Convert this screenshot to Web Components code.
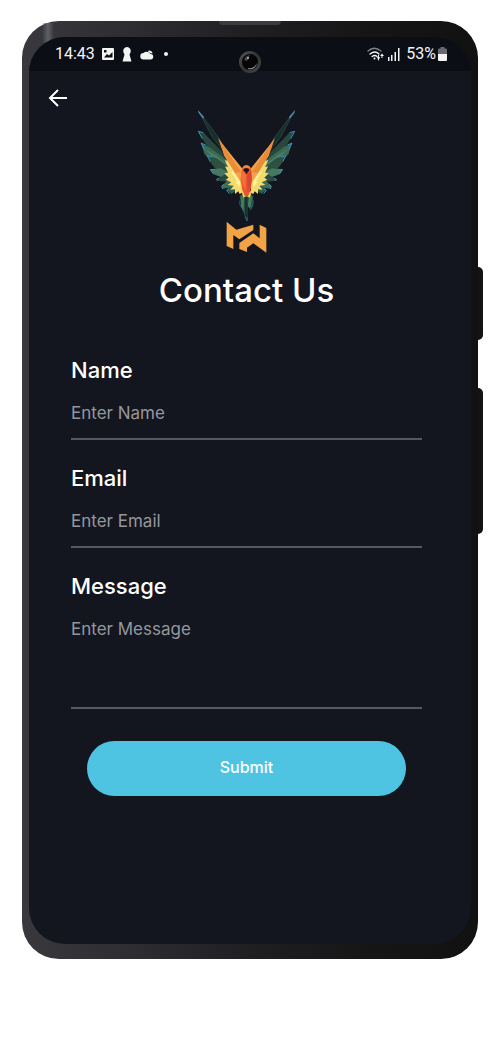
<!DOCTYPE html>
<html lang="en">
<head>
<meta charset="utf-8">
<meta name="viewport" content="width=device-width, initial-scale=1">
<title>Contact Us</title>
<style>
  body { margin: 0; background: #fff; color: #fff; font-family: Inter, "Open Sans", sans-serif; }
</style>
</head>
<body>
<phone-frame>
  <status-bar slot="status"></status-bar>
  <contact-page></contact-page>
</phone-frame>

<template id="phone-frame">
  <style>
    :host { display: block; padding: 21px 22px; }
    .body { position: relative; padding: 16px 7px 15px; border-radius: 37px;
      background: linear-gradient(90deg, #38383d, #2d2c31 25%, #1f1f22 50%, #161617 75%, #111); }
    .body::before { content: ""; position: absolute; left: 20px; top: 2px; width: 12px; height: 20px;
      background: linear-gradient(90deg, transparent, #5c6266, transparent); }
    .speaker { position: absolute; top: 0; left: 197px; right: 197px; height: 4px; background: #3c3c40; border-radius: 0 0 4px 4px; }
    .key { position: absolute; left: 100%; width: 5px; background: #131313; border-radius: 0 5px 5px 0; }
    .power { top: 246px; height: 73px; }
    .volume { top: 367px; height: 146px; }
    .screen { position: relative; overflow: hidden; border-radius: 36px; background: #13151f; }
    .camera { position: absolute; top: 30px; left: 50%; margin-left: -11px; width: 22px; height: 22px; }
  </style>
  <div class="body">
    <div class="speaker"></div>
    <div class="key power"></div>
    <div class="key volume"></div>
    <div class="screen"><slot name="status"></slot><slot></slot></div>
    <svg class="camera" viewBox="0 0 22 22" aria-hidden="true">
      <defs><linearGradient id="ring" x2="1" y2="1"><stop stop-color="#55575a"/><stop offset=".5" stop-color="#313234"/><stop offset="1" stop-color="#46494c"/></linearGradient></defs>
      <circle cx="11" cy="11" r="11" fill="url(#ring)"/>
      <circle cx="11" cy="11" r="8" fill="#050506"/>
      <path d="M9 17q6 1 9-5a7 7 0 0 1-9 6z" fill="#8a8d90"/>
      <path d="M5 9q1-4 6-5L8 10z" fill="#45484c"/>
      <circle cx="9" cy="7" r="1" fill="#bbb"/>
    </svg>
  </div>
</template>

<template id="status-bar">
  <style>
    :host { display: flex; align-items: center; justify-content: space-between; height: 34px; padding: 0 24px 0 26px;
      background: #0c0e16; color: #f4f4f5; font: 16px/20px Roboto, sans-serif; }
    .side { display: flex; align-items: center; }
    .left { gap: 7px; }
    .right { gap: 2px; }
    .pct { margin-left: 4px; }
    svg { display: block; fill: currentColor; }
  </style>
  <div class="side left">
    <span>14:43</span>
    <svg width="12" height="12" viewBox="0 0 12 12"><path fill-rule="evenodd" d="M1 0h10q1 0 1 1v10q0 1-1 1H1q-1 0-1-1V1q0-1 1-1zM2 9.500h8.500V4L7 7.500 5 6zM2 2v2.500h2.500V2z"/></svg>
    <svg width="12" height="15" viewBox="0 0 12 15"><path d="M6 0a4 4 0 0 1 3.500 5.500L8.500 7.500l2 7h-9l2-7-1-2A4 4 0 0 1 6 0z"/></svg>
    <svg width="14" height="11" viewBox="0 0 14 11"><path d="M3.500 10.500a3.200 3.200 0 0 1 0-6.400 4 4 0 0 1 6 0l1 1a2.700 2.700 0 0 1 0 5.400z"/><path d="M8 2A3 3 0 0 1 12.500 4.500L10 4 8 2.500z"/></svg>
    <svg width="10" height="4" viewBox="0 0 10 4"><circle cx="5" cy="2" r="2"/></svg>
  </div>
  <div class="side right">
    <svg width="18" height="14" viewBox="0 0 18 14"><g fill="none" stroke="currentColor" stroke-width="1.300" stroke-linecap="round"><path opacity=".5" d="M1 4q6-5.500 13 0"/><path d="M3 7q5-4 9 0M5 9.500q3-2 5 0"/></g><circle cx="7.500" cy="11.500" r="1"/><path d="M10 10h1V8h1v2h1l-1.500 4zM13 9l2-2.500L17 9h-1.500v2h-1V9z"/></svg>
    <svg width="13" height="13" viewBox="0 0 13 13"><path d="M1 9h1.500v4H1zM4 7h1.500v6H4zM7.500 4H9v9H7.500zM11 0h1.500v13H11z"/></svg>
    <span class="pct">53%</span>
    <svg width="9" height="14" viewBox="0 0 9 14"><path opacity=".4" d="M2.500 0h4v1.500H8q1 0 1 1V7H0V2.500q0-1 1-1h1.500z"/><path d="M0 7h9v6q0 1-1 1H1q-1 0-1-1z"/></svg>
  </div>
</template>

<template id="parrot-logo">
  <style>:host { display: block; } svg { display: block; margin: 0 auto; }</style>
  <svg width="125" height="144" viewBox="-3 27 375 432" role="img" aria-label="MW parrot logo">
    <defs>
      <g id="wing">
        <path fill="#17302b" stroke="#405b55" stroke-width="1.500" d="M40 32l52 69 12 16 9 34-31-39z"/>
        <path fill="#4495bd" d="M39 31l18 20-2 5-14-17z"/>
        <path fill="#29483d" d="M40 94l17 5 55 57 20 46-58-52-22-34z"/>
        <path fill="#396a55" d="M48 129l25 13 53 39 20 46-61-35-27-31z"/>
        <path fill="#4b7d66" d="M60 147l32 19 42 32-2 9-41-27z"/>
        <path fill="#2c5142" d="M67 167l27 7 50 37 10 29-60-30-19-25z"/>
        <path fill="#477760" d="M76 209l32-4 46 26 4 17-36-12-38-14z"/>
        <path fill="#294c3d" d="M94 239l26-16 38 19-20 4-39-3z"/>
        <path fill="#3b6f57" d="M110 258l18-17 29 2-15 19-28 4z"/>
        <path fill="#315c4b" d="M125 270l24-18 10 18-20 11z"/>
        <path fill="none" stroke="#3c8fb5" stroke-width="3" stroke-linejoin="round" d="M52 116L40 94l15 4M58 148l-10-19 14 6M75 184l-8-17 14 4M85 221l-9-12 14-1M98 242l-4-3 8-5M113 267l-3-9 7-5M133 281l-8-10 7-5"/>
        <path fill="#f3dc6d" d="M115 148l56 70v60l-7 4-4-8-10 8v-14l-14 1 10-12-18-2 11-8-17-8 9-6-13-13 11-2-9-19 9 2-10-21 9 3z"/>
        <path fill="#fff29a" d="M126 180l40 56-2 26-12-16 4-3-18-27 7 1z"/>
        <path fill="#f4a447" d="M100 115l18 24 53 66v48l-21-33-32-52z"/>
        <path fill="#e98b39" d="M100 115l22 32 47 70-19 2-30-50z"/>
      </g>
    </defs>
    <use href="#wing"/>
    <use href="#wing" transform="translate(369 0) scale(-1 1)"/>
    <path fill="#2e5b49" d="M164 288l11-9 20 1 10 9-4 35-13-13-1 52-7-12-12-38z"/>
    <path fill="#477a60" d="M169 289l9 5-3 42-7-18zM201 288l-9 6-4 24 8 10z"/>
    <path fill="#17352f" d="M179 290l9 1-1 72-8-19z"/>
    <path fill="none" stroke="#347e9f" stroke-width="2" d="M164 302l1 13 7 11M205 301l-2 16-7 14M180 350l6 13 1-11"/>
    <path fill="#f3cf61" d="M166 262l9 31 9-5 11 5 9-31-10 15z"/>
    <path fill="#ed552f" d="M171 208q3-12 13-12 11 0 14 12l3 28-4 32-8 21h-9l-9-22-4-31z"/>
    <path fill="#f2713a" d="M171 210l12 16-2 46-14-36z"/>
    <path fill="#d9452d" d="M198 210l-12 17 2 50 10-23 2-18z"/>
    <path fill="#f38a41" d="M171 208q3-12 13-12 11 0 14 12l-7-5h-13z"/>
    <path fill="#18151b" d="M176 207l8-3 8 3v7l-4 1-1 6h-4l-2-6-5-1z"/>
    <path fill="#f1a346" d="M125 365l29 24 51-15v16l-42 28-18-13v42l-20-9z"/>
    <path fill="#f1a346" d="M163 429l42-29 19 15v-41l20 10v74l-39-28-19 13v13l-23-9z"/>
  </svg>
</template>

<template id="form-field">
  <style>
    :host { display: flex; flex-direction: column; gap: 12px; }
    label { font-size: 22px; font-weight: 500; line-height: 32px; }
    input, textarea { display: block; box-sizing: border-box; width: 100%; height: 42px; margin: 0; padding: 0 0 10px;
      border: 0; border-bottom: 2px solid #555761; border-radius: 0; outline: 0; background: none; color: #fff;
      font: 17px/30px Inter, "Open Sans", sans-serif; resize: none; }
    textarea { height: 95px; overflow: hidden; }
    ::placeholder { color: #96979c; opacity: 1; }
  </style>
</template>

<template id="contact-page">
  <style>
    :host { display: block; padding-bottom: 148px; }
    nav { padding: 16px 18px 0; }
    nav button { display: block; width: 22px; height: 22px; padding: 0; border: 0; background: none; color: #fff; cursor: pointer; }
    svg { display: block; }
    main { padding: 0 49px 0 42px; }
    h1 { margin: 17px 0 44px; text-align: center; font-size: 33px; line-height: 40px; font-weight: 500; }
    form { display: flex; flex-direction: column; gap: 22px; }
    .submit { height: 55px; margin: 10px 16px 0; padding: 0 0 4px; border: 0; border-radius: 28px; background: #4fc4e2; color: #fff;
      font: 500 16px/24px Inter, "Open Sans", sans-serif; cursor: pointer; }
  </style>
  <nav><button type="button" aria-label="Back">
    <svg width="22" height="22" viewBox="0 0 22 22" fill="none" stroke="currentColor" stroke-width="2"><path d="M20 11H4M11 3l-8 8 8 8"/></svg>
  </button></nav>
  <main>
    <parrot-logo></parrot-logo>
    <h1>Contact Us</h1>
    <form>
      <form-field label="Name"></form-field>
      <form-field label="Email" type="email"></form-field>
      <form-field label="Message" multiline></form-field>
      <button class="submit" type="button">Submit</button>
    </form>
  </main>
</template>

<script>
  class TemplateElement extends HTMLElement {
    constructor() {
      super();
      this.attachShadow({ mode: "open" });
      this.shadowRoot.append(document.getElementById(this.localName).content.cloneNode(true));
    }
  }
  class PhoneFrame extends TemplateElement {}
  class StatusBar extends TemplateElement {}
  class ParrotLogo extends TemplateElement {}
  class ContactPage extends TemplateElement {}
  class FormField extends TemplateElement {
    connectedCallback() {
      if (this.control) return;
      const text = this.getAttribute("label");
      const label = document.createElement("label");
      const multiline = this.hasAttribute("multiline");
      this.control = document.createElement(multiline ? "textarea" : "input");
      if (!multiline) this.control.type = this.getAttribute("type") || "text";
      label.textContent = text;
      label.htmlFor = this.control.id = "control";
      this.control.placeholder = "Enter " + text;
      this.shadowRoot.append(label, this.control);
    }
  }
  customElements.define("parrot-logo", ParrotLogo);
  customElements.define("form-field", FormField);
  customElements.define("status-bar", StatusBar);
  customElements.define("contact-page", ContactPage);
  customElements.define("phone-frame", PhoneFrame);
</script>
</body>
</html>
